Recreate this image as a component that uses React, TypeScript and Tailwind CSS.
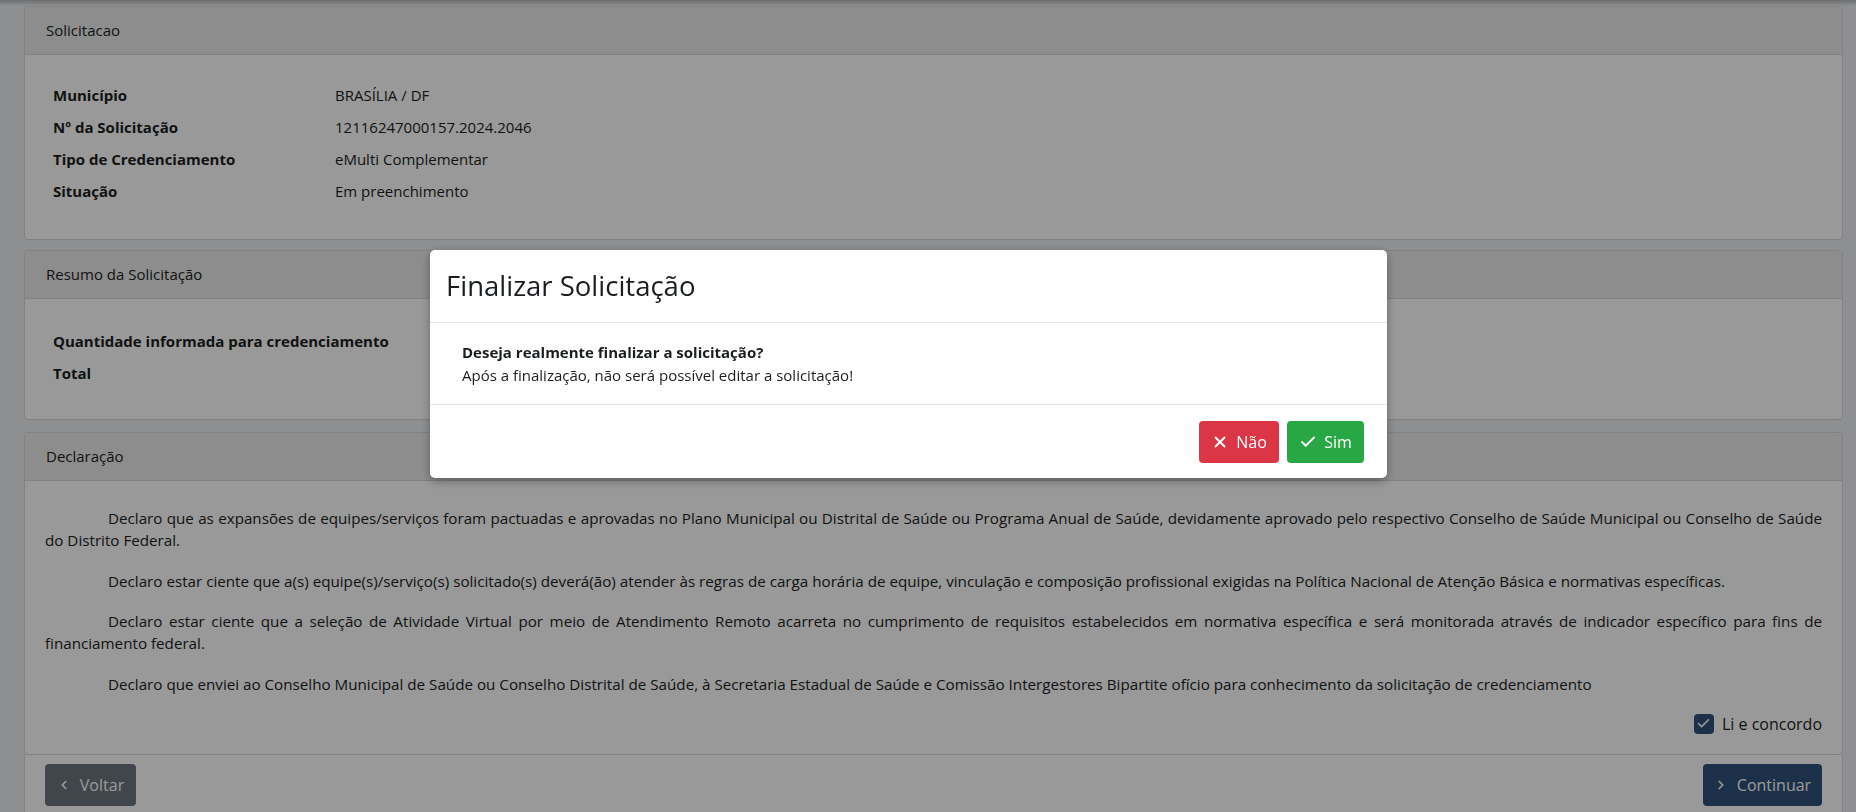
import React from "react";
import { Check, ChevronLeft, ChevronRight, X } from "lucide-react";

const font = { fontFamily: '"Open Sans", "Noto Sans", sans-serif' };

const CardHeader = ({ title }: { title: string }) => (
  <div className="h-[48px] flex items-center px-[21px] bg-[#ececec] border-b border-[#d9d9d9] rounded-t-[4px] text-[15px] text-[#1b1e21]">
    {title}
  </div>
);

const InfoRow = ({ label, value }: { label: string; value?: string }) => (
  <div className="flex h-[32px] items-center">
    <div className="w-[282px] shrink-0 whitespace-nowrap font-bold text-[#1b1e21]">{label}</div>
    {value && <div className="text-[#1b1e21]">{value}</div>}
  </div>
);

const paragraphs = [
  "Declaro que as expansões de equipes/serviços foram pactuadas e aprovadas no Plano Municipal ou Distrital de Saúde ou Programa Anual de Saúde, devidamente aprovado pelo respectivo Conselho de Saúde Municipal ou Conselho de Saúde do Distrito Federal.",
  "Declaro estar ciente que a(s) equipe(s)/serviço(s) solicitado(s) deverá(ão) atender às regras de carga horária de equipe, vinculação e composição profissional exigidas na Política Nacional de Atenção Básica e normativas específicas.",
  "Declaro estar ciente que a seleção de Atividade Virtual por meio de Atendimento Remoto acarreta no cumprimento de requisitos estabelecidos em normativa específica e será monitorada através de indicador específico para fins de financiamento federal.",
  "Declaro que enviei ao Conselho Municipal de Saúde ou Conselho Distrital de Saúde, à Secretaria Estadual de Saúde e Comissão Intergestores Bipartite ofício para conhecimento da solicitação de credenciamento",
];

const App = () => {
  return (
    <div style={font} className="min-h-screen bg-[#eceef1] text-[15px] text-[#1b1e21]">
      <div className="h-[6px] bg-gradient-to-b from-[#b5b7ba] to-[#eceef1]" />
      <div className="pl-[24px] pr-[13px] flex flex-col">
        <section className="bg-white border border-[#d9d9d9] rounded-[4px]">
          <CardHeader title="Solicitacao" />
          <div className="pl-[28px] pt-[24px] pb-[32px]">
            <InfoRow label="Município" value="BRASÍLIA / DF" />
            <InfoRow label="Nº da Solicitação" value="12116247000157.2024.2046" />
            <InfoRow label="Tipo de Credenciamento" value="eMulti Complementar" />
            <InfoRow label="Situação" value="Em preenchimento" />
          </div>
        </section>

        <section className="mt-[10px] bg-white border border-[#d9d9d9] rounded-[4px]">
          <CardHeader title="Resumo da Solicitação" />
          <div className="pl-[28px] pt-[26px] pb-[30px]">
            <InfoRow label="Quantidade informada para credenciamento" />
            <InfoRow label="Total" />
          </div>
        </section>

        <section className="mt-[12px] bg-white border border-[#d9d9d9] rounded-[4px]">
          <CardHeader title="Declaração" />
          <div className="px-[20px] pt-[26px] pb-[20px] text-[15.2px]">
            {paragraphs.map((p, i) => (
              <p key={i} className="text-justify indent-[63px] leading-[22px] mb-[18.5px]">
                {p}
              </p>
            ))}
            <div className="flex justify-end items-center gap-[8px] h-[21px]">
              <span className="w-[20px] h-[20px] rounded-[4px] bg-[#2f527a] flex items-center justify-center">
                <Check className="w-[15px] h-[15px] text-white" strokeWidth={2.5} />
              </span>
              <span className="text-[16px]">Li e concordo</span>
            </div>
          </div>
        </section>

        <section className="bg-white border-x border-[#d9d9d9] h-[80px] px-[20px] pt-[9px] flex justify-between items-start">
          <button className="h-[42px] w-[91px] rounded-[4px] bg-[#6c757d] text-white text-[16px] flex items-center justify-center gap-[9px]">
            <ChevronLeft className="w-[14px] h-[14px]" strokeWidth={3} />
            Voltar
          </button>
          <button className="h-[42px] w-[119px] rounded-[4px] bg-[#2f527a] text-white text-[16px] flex items-center justify-center gap-[9px]">
            <ChevronRight className="w-[14px] h-[14px]" strokeWidth={3} />
            Continuar
          </button>
        </section>
      </div>

      <div className="fixed inset-0 bg-black/40">
        <div className="ml-[430px] mt-[250px] w-[957px] bg-white rounded-[5px] shadow-[0_3px_10px_rgba(0,0,0,0.35)]">
          <div className="h-[73px] flex items-center px-[16px] border-b border-[#e5e5e5]">
            <h2 className="text-[27.5px] text-[#1b1e21]">Finalizar Solicitação</h2>
          </div>
          <div className="h-[81px] px-[32px] flex flex-col justify-center">
            <p className="font-bold leading-[23px]">Deseja realmente finalizar a solicitação?</p>
            <p className="leading-[23px]">Após a finalização, não será possível editar a solicitação!</p>
          </div>
          <div className="h-[74px] border-t border-[#e5e5e5] flex items-center justify-end gap-[8px] pr-[23px]">
            <button className="h-[42px] w-[80px] rounded-[4px] bg-[#dc3545] text-white text-[16px] flex items-center justify-center gap-[7px]">
              <X className="w-[18px] h-[18px]" strokeWidth={2.5} />
              Não
            </button>
            <button className="h-[42px] w-[77px] rounded-[4px] bg-[#28a745] text-white text-[16px] flex items-center justify-center gap-[7px]">
              <Check className="w-[18px] h-[18px]" strokeWidth={2.5} />
              Sim
            </button>
          </div>
        </div>
      </div>
    </div>
  );
};

export default App;
